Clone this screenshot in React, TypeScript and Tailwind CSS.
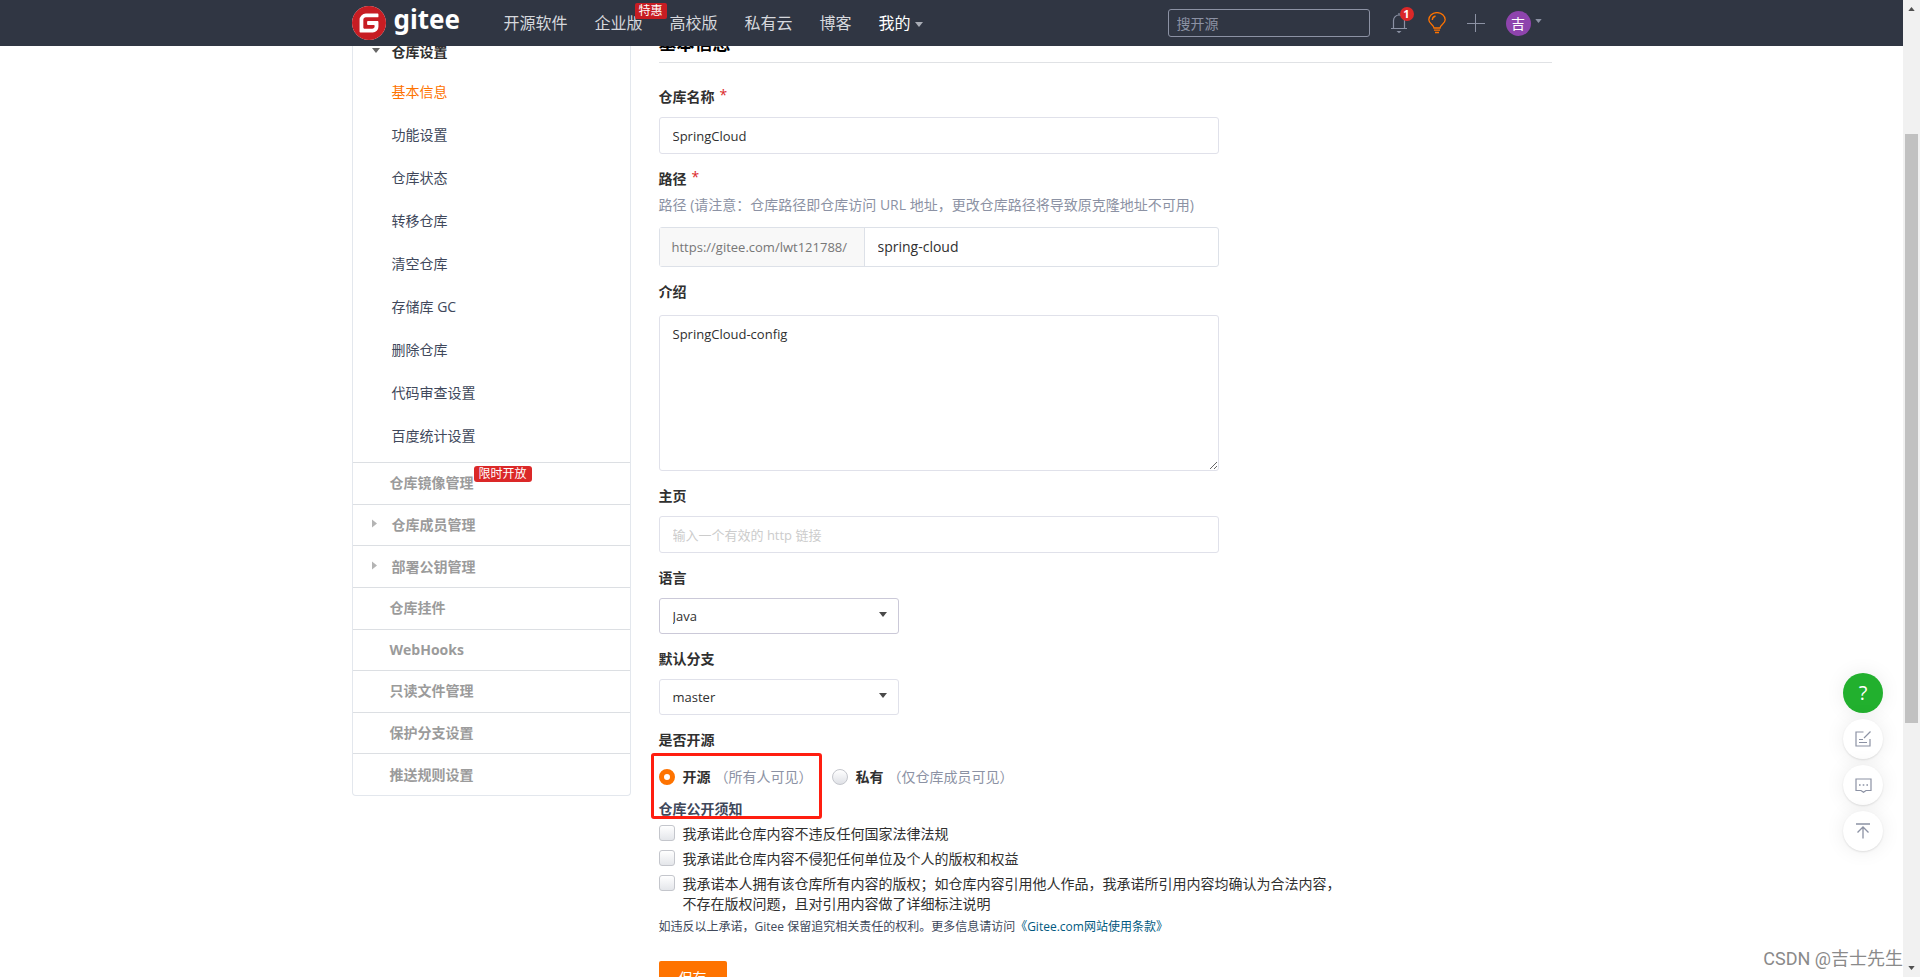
import { useState } from 'react';
import type { ReactNode } from 'react';
import { SiGitee } from 'react-icons/si';

const navLinks = [
  { label: '开源软件' },
  { label: '企业版', badge: '特惠' },
  { label: '高校版' },
  { label: '私有云' },
  { label: '博客' },
];

const settingLinks = [
  '基本信息',
  '功能设置',
  '仓库状态',
  '转移仓库',
  '清空仓库',
  '存储库 GC',
  '删除仓库',
  '代码审查设置',
  '百度统计设置',
];

const sections = [
  { label: '仓库镜像管理', badge: '限时开放' },
  { label: '仓库成员管理', expandable: true },
  { label: '部署公钥管理', expandable: true },
  { label: '仓库挂件' },
  { label: 'WebHooks' },
  { label: '只读文件管理' },
  { label: '保护分支设置' },
  { label: '推送规则设置' },
];

const promises = [
  '我承诺此仓库内容不违反任何国家法律法规',
  '我承诺此仓库内容不侵犯任何单位及个人的版权和权益',
  '我承诺本人拥有该仓库所有内容的版权；如仓库内容引用他人作品，我承诺所引用内容均确认为合法内容，不存在版权问题，且对引用内容做了详细标注说明',
];

function CaretDown({ className }: { className: string }) {
  return (
    <svg viewBox="0 0 8 5" className={className} fill="currentColor">
      <path d="M0 0h8L4 5z" />
    </svg>
  );
}

function CaretRight({ className }: { className: string }) {
  return (
    <svg viewBox="0 0 5 8" className={className} fill="currentColor">
      <path d="M0 0v8l5-4z" />
    </svg>
  );
}

function Header() {
  return (
    <header className="absolute inset-x-0 top-0 z-10 h-[46px] bg-[#303643]">
      <div className="mx-auto flex h-full max-w-[1200px] items-center">
        <a href="#" className="flex w-[152px] shrink-0 items-center gap-2">
          <span className="rounded-full bg-white">
            <SiGitee className="h-[34px] w-[34px] text-[#c71d23]" />
          </span>
          <span className="pb-2 font-['Noto_Sans','Open_Sans',sans-serif] text-[26px] leading-8 font-bold text-white">gitee</span>
        </a>

        <nav className="flex items-center gap-[27px] text-base leading-6 text-[#d6d8dd]">
          {navLinks.map((link) => (
            <a key={link.label} href="#" className="relative whitespace-nowrap">
              {link.label}
              {link.badge && (
                <span className="absolute -top-2 left-10 z-10 rounded-xs bg-[#c71d23] px-1 text-xs leading-4 text-white">
                  {link.badge}
                </span>
              )}
            </a>
          ))}
          <a href="#" className="flex items-center gap-1 whitespace-nowrap text-white">
            我的
            <CaretDown className="mt-[2px] h-[5px] w-2 text-[#a9adb6]" />
          </a>
        </nav>

        <div className="ml-auto flex items-center gap-[21px] pr-[10px] text-[#8c92a4]">
          <input
            type="search"
            aria-label="搜开源"
            placeholder="搜开源"
            className="h-7 w-[202px] rounded-[3px] border border-[#8c92a4] bg-transparent px-2 text-sm text-white outline-none placeholder:text-[#8c92a4]"
          />
          <button type="button" aria-label="通知" className="relative">
            <svg viewBox="0 0 16 22" className="h-[22px] w-4" fill="none" stroke="currentColor" strokeWidth="1.2">
              <path d="M0 16.5h16M2.5 16V8.5a5.5 5.5 0 0 1 11 0V16M8 3V1" />
              <path d="M5.5 19h5L8 21.2z" fill="currentColor" stroke="none" />
            </svg>
            <span className="absolute -top-[5px] left-[9px] h-[14px] w-[14px] rounded-full bg-[#db2828] text-[11px] leading-[14px] font-bold text-white">
              1
            </span>
          </button>
          <button type="button" aria-label="活动" className="text-[#fe7300]">
            <svg viewBox="0 0 18 22" className="h-[22px] w-[18px]" fill="none" stroke="currentColor" strokeWidth="1.3">
              <path d="M6 16c0-3-5.200-4.200-5.200-8.200a8.200 7.200 0 0 1 16.400 0C17.200 11.800 12 13 12 16z" />
              <path d="M4.300 8c0-2 1.200-3.500 3.200-4M6 18.200h6M7 20.500h4" />
            </svg>
          </button>
          <button type="button" aria-label="新建">
            <svg viewBox="0 0 18 18" className="h-[18px] w-[18px]" stroke="currentColor">
              <path d="M0 9.500h18M8.500 0v18" />
            </svg>
          </button>
          <button type="button" className="flex items-center gap-1">
            <span className="h-[25px] w-[25px] rounded-full bg-[#8e44ad] text-sm leading-[25px] text-white">吉</span>
            <CaretDown className="mb-1 h-1 w-[7px]" />
          </button>
        </div>
      </div>
    </header>
  );
}

function Sidebar() {
  return (
    <aside className="w-[279px] shrink-0 self-start rounded-b border border-t-0 border-[#e3e7ed] pt-[42px]">
      <div className="flex items-center gap-3 pl-[19px] leading-5 font-bold text-[#303030]">
        <CaretDown className="mb-1 h-[5px] w-2 text-[#666]" />
        仓库设置
      </div>
      <ul className="pt-2 pb-[5px]">
        {settingLinks.map((label, i) => (
          <li key={label}>
            <a
              href="#"
              className={`flex h-[43px] items-center pl-[39px] ${i === 0 ? 'text-[#fe7300]' : 'text-[#40485b]'}`}
            >
              {label}
            </a>
          </li>
        ))}
      </ul>
      <ul className="grid h-[333px] auto-rows-fr font-bold text-[#9b9b9b]">
        {sections.map((section) => (
          <li key={section.label} className="border-t border-[#dcdfe3]">
            <a href="#" className="flex h-full items-center pl-[19px]">
              <span className="w-[18px]">
                {section.expandable && <CaretRight className="mb-[2px] h-[9px] w-[5px] text-[#b4b4b4]" />}
              </span>
              <span className={section.expandable ? 'pl-[2px]' : ''}>{section.label}</span>
              {section.badge && (
                <span className="mt-[3px] self-start rounded-[3px] bg-[#db2828] px-[5px] text-xs leading-4 font-normal text-white">
                  {section.badge}
                </span>
              )}
            </a>
          </li>
        ))}
      </ul>
    </aside>
  );
}

type FieldProps = {
  id: string;
  label: string;
  required?: boolean;
  children: ReactNode;
};

function Field({ id, label, required, children }: FieldProps) {
  return (
    <div className="mb-[15px]">
      <label htmlFor={id} className="mb-[10px] flex h-5 leading-5 font-bold">
        {label}
        {required && <span className="ml-[5px] leading-4 font-normal text-[#db2828]">*</span>}
      </label>
      {children}
    </div>
  );
}

function Dropdown({ id, value, border }: { id: string; value: string; border: string }) {
  return (
    <div className="relative w-60">
      <select
        id={id}
        defaultValue={value}
        className={`block h-9 w-full appearance-none rounded-[3px] border bg-white px-[13px] text-[13px] outline-none ${border}`}
      >
        <option value={value}>{value}</option>
      </select>
      <CaretDown className="pointer-events-none absolute top-[14px] right-3 h-[5px] w-2 text-[#4a4a4a]" />
    </div>
  );
}

function SettingsForm() {
  const [visibility, setVisibility] = useState('public');

  const radioClass =
    'h-4 w-4 shrink-0 appearance-none rounded-full border border-[#c4c6cc] bg-linear-to-b from-white to-[#dfe1e6] checked:border-5 checked:border-[#fe7300] checked:bg-white checked:bg-none';

  return (
    <form className="max-w-[560px]" onSubmit={(e) => e.preventDefault()}>
      <Field id="name" label="仓库名称" required>
        <input
          id="name"
          type="text"
          defaultValue="SpringCloud"
          className="block h-[37px] w-full rounded-[3px] border border-[#e0e1ea] px-[13px] text-[13px] outline-none"
        />
      </Field>

      <Field id="path" label="路径" required>
        <p className="-mt-1 mb-3 leading-5 whitespace-nowrap text-[#8c92a4]">
          路径 (请注意：仓库路径即仓库访问 URL 地址，更改仓库路径将导致原克隆地址不可用)
        </p>
        <div className="flex h-10 rounded-[3px] border border-[#dde1e8]">
          <span className="flex w-[205px] shrink-0 items-center border-r border-[#dde1e8] bg-[#f8f8f8] pl-3 text-[13px] text-[#777]">
            https://gitee.com/lwt121788/
          </span>
          <input id="path" type="text" defaultValue="spring-cloud" className="min-w-0 flex-1 px-[13px] outline-none" />
        </div>
      </Field>

      <Field id="desc" label="介绍">
        <textarea
          id="desc"
          defaultValue="SpringCloud-config"
          className="mt-[13px] block h-[156px] w-full rounded-[3px] border border-[#e0e1ea] px-[13px] py-2 text-[13px] leading-5 outline-none"
        />
      </Field>

      <Field id="homepage" label="主页">
        <input
          id="homepage"
          type="url"
          placeholder="输入一个有效的 http 链接"
          className="block h-[37px] w-full rounded-[3px] border border-[#e0e1ea] px-[13px] text-[13px] outline-none placeholder:text-[#ccc]"
        />
      </Field>

      <Field id="language" label="语言">
        <Dropdown id="language" value="Java" border="border-[#cbc9d8]" />
      </Field>

      <Field id="branch" label="默认分支">
        <Dropdown id="branch" value="master" border="border-[#e0e1ea]" />
      </Field>

      <fieldset>
        <legend className="leading-5 font-bold">是否开源</legend>
        <div className="relative mt-[17px] flex leading-5">
          <label className="flex w-[173px] items-center gap-2 whitespace-nowrap">
            <input
              type="radio"
              name="visibility"
              checked={visibility === 'public'}
              onChange={() => setVisibility('public')}
              className={radioClass}
            />
            <span>
              <b>开源</b>
              <span className="ml-1 text-[#8c92a4]">（所有人可见）</span>
            </span>
          </label>
          <label className="flex items-center gap-2 whitespace-nowrap">
            <input
              type="radio"
              name="visibility"
              checked={visibility === 'private'}
              onChange={() => setVisibility('private')}
              className={radioClass}
            />
            <span>
              <b>私有</b>
              <span className="ml-1 text-[#8c92a4]">（仅仓库成员可见）</span>
            </span>
          </label>
          <div className="pointer-events-none absolute -top-[14px] -left-2 h-[66px] w-[171px] rounded-[3px] border-3 border-[#ff1e10]" />
        </div>
      </fieldset>

      <h4 className="mt-3 mb-[5px] leading-5 font-bold text-[#40485b]">仓库公开须知</h4>
      <ul className="flex w-[690px] flex-col gap-[5px]">
        {promises.map((text, i) => (
          <li key={i} className="flex gap-2">
            <input
              id={`promise-${i}`}
              type="checkbox"
              className="mt-[1px] h-4 w-4 shrink-0 appearance-none rounded-[3px] border border-[#c4c6cc] bg-linear-to-b from-white to-[#e4e6ea] checked:bg-[#fe7300] checked:bg-none"
            />
            <label htmlFor={`promise-${i}`} className="leading-5">
              {text}
            </label>
          </li>
        ))}
      </ul>
      <p className="mt-[3px] text-xs leading-5 whitespace-nowrap text-[#40485b]">
        如违反以上承诺，Gitee 保留追究相关责任的权利。更多信息请访问
        <a href="#" className="text-[#005980]">
          《Gitee.com网站使用条款》
        </a>
      </p>

      <button type="submit" className="mt-6 h-[34px] w-[68px] rounded-xs bg-[#fe7300] text-white">
        保存
      </button>
    </form>
  );
}

function FloatingTools() {
  const toolClass =
    'flex h-10 w-10 items-center justify-center rounded-full bg-white text-[#8c92a4] shadow-[0_1px_2px_rgba(0,0,0,0.1),0_0_20px_rgba(0,0,0,0.08)]';

  return (
    <div className="absolute right-5 bottom-[126px] flex flex-col gap-[6px]">
      <button
        type="button"
        className="h-10 w-10 rounded-full bg-[#22b02e] text-xl font-medium text-white shadow-[0_0_20px_rgba(0,0,0,0.08)]"
      >
        ?
      </button>
      <button type="button" aria-label="反馈" className={toolClass}>
        <svg viewBox="0 0 16 16" className="h-4 w-4" fill="none" stroke="currentColor" strokeWidth="1.2">
          <path d="M8.500 1H1v14h14V8M15.500.500L9 7M4 8.500h4M4 11.500h8" />
        </svg>
      </button>
      <button type="button" aria-label="评论" className={toolClass}>
        <svg viewBox="0 0 17 15" className="h-[15px] w-[17px]" fill="none" stroke="currentColor" strokeWidth="1.2">
          <path d="M1 1h15v11.500h-5L8.500 14.300 6 12.500H1z" />
          <path d="M4 7h1.600M7.700 7h1.600M11.400 7H13" strokeWidth="1.600" />
        </svg>
      </button>
      <button type="button" aria-label="回到顶部" className={toolClass}>
        <svg viewBox="0 0 14 16" className="h-4 w-[14px]" fill="none" stroke="currentColor" strokeWidth="1.3">
          <path d="M0 1h14M7 15.500V4M1.500 9.500L7 4l5.500 5.500" />
        </svg>
      </button>
    </div>
  );
}

function Scrollbar() {
  return (
    <div className="flex w-[17px] shrink-0 flex-col items-center justify-between bg-[#f1f1f1] py-[7px] text-[#505050]">
      <CaretDown className="h-1 w-[7px] rotate-180" />
      <div className="flex w-full flex-1 justify-center pt-[123px]">
        <div className="h-[589px] w-[13px] bg-[#c1c1c1]" />
      </div>
      <CaretDown className="h-1 w-[7px]" />
    </div>
  );
}

export default function App() {
  return (
    <div className="flex h-screen overflow-hidden bg-white font-['Open_Sans','Noto_Sans_CJK_SC',sans-serif] text-sm text-[#303030]">
      <div className="relative min-w-0 flex-1 overflow-hidden">
        <Header />
        <main className="mx-auto flex max-w-[1200px] gap-7">
          <Sidebar />
          <section className="min-w-0 flex-1 pt-[29px]">
            <h3 className="mb-6 border-b border-[#e0e2e5] pb-[5px] text-lg leading-7 font-bold text-black">基本信息</h3>
            <SettingsForm />
          </section>
        </main>
        <FloatingTools />
        <div className="absolute right-0 bottom-1 font-['Roboto','Noto_Sans_CJK_SC',sans-serif] text-lg leading-7 whitespace-nowrap text-[#8a8a8a]">
          CSDN @吉士先生
        </div>
      </div>
      <Scrollbar />
    </div>
  );
}
